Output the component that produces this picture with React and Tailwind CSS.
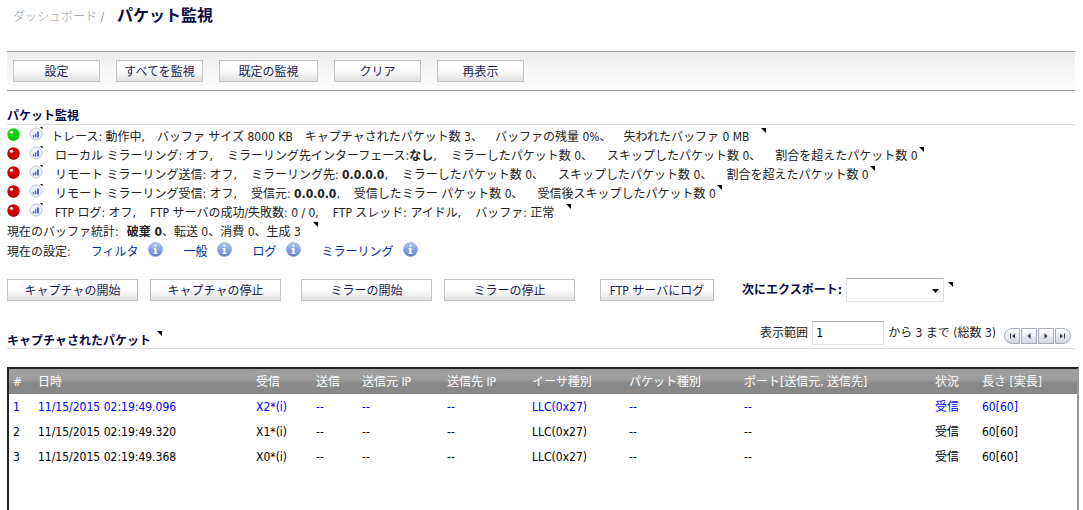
const buttonFace =
  "shrink-0 h-[22px] border border-[#c3c3c3] bg-linear-to-b from-white from-45% to-[#e2e2e2] pt-px text-center leading-5 text-[#1c1c50]";

const toolbarButtons = [
  { label: "設定", width: "w-[87px]" },
  { label: "すべてを監視", width: "w-[87px]" },
  { label: "既定の監視", width: "w-[99px]" },
  { label: "クリア", width: "w-[87px]" },
  { label: "再表示", width: "w-[87px]" },
];

const statusRows = [
  {
    id: "trace",
    on: true,
    parts: [
      "トレース: 動作中,",
      "バッファ サイズ 8000 KB",
      "キャプチャされたパケット数 3、",
      "バッファの残量 0%、",
      "失われたバッファ 0 MB",
    ],
    markerGap: "ml-3",
  },
  {
    id: "local",
    on: false,
    parts: [
      "ローカル ミラーリング: オフ,",
      <>
        ミラーリング先インターフェース:<b>なし</b>,
      </>,
      "ミラーしたパケット数 0、",
      "スキップしたパケット数 0、",
      "割合を超えたパケット数 0",
    ],
    markerGap: "ml-px",
  },
  {
    id: "remote-send",
    on: false,
    parts: [
      "リモート ミラーリング送信: オフ,",
      <>
        ミラーリング先: <b>0.0.0.0</b>,
      </>,
      "ミラーしたパケット数 0、",
      "スキップしたパケット数 0、",
      "割合を超えたパケット数 0",
    ],
    markerGap: "ml-px",
  },
  {
    id: "remote-receive",
    on: false,
    parts: [
      "リモート ミラーリング受信: オフ,",
      <>
        受信元: <b>0.0.0.0</b>,
      </>,
      "受信したミラー パケット数 0、",
      "受信後スキップしたパケット数 0",
    ],
    markerGap: "ml-px",
  },
  {
    id: "ftp",
    on: false,
    parts: [
      "FTP ログ: オフ,",
      "FTP サーバの成功/失敗数: 0 / 0,",
      "FTP スレッド: アイドル,",
      "バッファ: 正常",
    ],
    markerGap: "ml-3",
  },
];

const settingLinks = ["フィルタ", "一般", "ログ", "ミラーリング"];

const columns = [
  { label: "#", width: "w-[25px]" },
  { label: "日時", width: "w-[218px]" },
  { label: "受信", width: "w-[60px]" },
  { label: "送信", width: "w-[46px]" },
  { label: "送信元 IP", width: "w-[85px]" },
  { label: "送信先 IP", width: "w-[85px]" },
  { label: "イーサ種別", width: "w-[97px]" },
  { label: "パケット種別", width: "w-[115px]" },
  { label: "ポート[送信元, 送信先]", width: "w-[191px]" },
  { label: "状況", width: "w-[47px]" },
  { label: "長さ [実長]", width: "w-auto" },
];

const packets = [
  ["1", "11/15/2015 02:19:49.096", "X2*(i)", "--", "--", "--", "LLC(0x27)", "--", "--", "受信", "60[60]"],
  ["2", "11/15/2015 02:19:49.320", "X1*(i)", "--", "--", "--", "LLC(0x27)", "--", "--", "受信", "60[60]"],
  ["3", "11/15/2015 02:19:49.368", "X0*(i)", "--", "--", "--", "LLC(0x27)", "--", "--", "受信", "60[60]"],
];

const Marker = ({ className = "" }) => (
  <svg className={`h-[5px] w-[5px] shrink-0 ${className}`} viewBox="0 0 5 5" aria-hidden="true">
    <path d="M0 0H5V5Z" fill="#000" />
  </svg>
);

const StatusBall = ({ on }) => (
  <svg className="h-[13px] w-[13px] shrink-0" viewBox="0 0 13 13" aria-hidden="true">
    <circle cx="6.5" cy="6.5" r="6.2" fill={on ? "#0bd00b" : "#cc0404"} />
    <path
      d="M1 8.5a5.8 5.8 0 0 0 11 0a7 7 0 0 1-11 0Z"
      fill={on ? "#08b008" : "#a80000"}
    />
    <ellipse cx="4.5" cy="4.2" rx="1.8" ry="1.5" fill="#fff" opacity="0.9" />
  </svg>
);

const StatsIcon = () => (
  <svg className="h-[14px] w-[14px]" viewBox="0 0 14 14" aria-hidden="true">
    <circle cx="7" cy="7" r="6" fill="#eef0f7" stroke="#c3c7d8" />
    <path d="M3.8 8h1.5v2.5H3.8ZM5.9 6.5h1.5v4H5.9ZM8 4.5h2v6H8Z" fill="#5a6cc8" />
    <path d="M11 0h2.5v2.5Z" fill="#000" />
  </svg>
);

const InfoIcon = () => (
  <svg className="h-[15px] w-[15px]" viewBox="0 0 15 15" aria-hidden="true">
    <defs>
      <linearGradient id="info" x1="0" y1="0" x2="0" y2="1">
        <stop offset="0" stopColor="#b5c8f0" />
        <stop offset="1" stopColor="#5b80d2" />
      </linearGradient>
    </defs>
    <circle cx="7.5" cy="7.5" r="7" fill="url(#info)" stroke="#8aa2de" strokeWidth="0.7" />
    <path d="M6.5 2.8h2v2h-2ZM5.5 6h3v4.7h1v1.3h-4v-1.3h1V7.2h-1Z" fill="#fff" />
  </svg>
);

const pagerButtons = [
  { label: "最初", shape: "rounded-l-full pl-[2px]", path: "M1 1.5h1v5H1ZM6 1.5v5L3 4Z" },
  { label: "前", shape: "rounded-none", path: "M5.5 1v6L2.5 4Z" },
  { label: "次", shape: "rounded-none", path: "M2.5 1v6L5.5 4Z" },
  { label: "最後", shape: "rounded-r-full pr-[2px]", path: "M6 1.5h1v5H6ZM2 1.5v5L5 4Z" },
];

const Pager = () => (
  <div className="flex gap-px">
    {pagerButtons.map((item) => (
      <button
        key={item.label}
        aria-label={item.label}
        className={`flex h-4 w-4 items-center justify-center border border-[#a9adb9] bg-linear-to-b from-white to-[#d3d6e0] ${item.shape}`}
      >
        <svg className="h-2 w-2 shrink-0" viewBox="0 0 8 8" aria-hidden="true">
          <path d={item.path} fill="#33364a" />
        </svg>
      </button>
    ))}
  </div>
);

const StatusRow = ({ row }) => (
  <li className="flex h-[19px] items-start">
    <div className="flex items-center gap-[9px]">
      <StatusBall on={row.on} />
      <button aria-label="統計">
        <StatsIcon />
      </button>
    </div>
    <div className={`flex leading-5 ${row.on ? "ml-2 gap-3" : "ml-3 gap-3.5"}`}>
      {row.parts.map((part, index) => (
        <span key={index}>{part}</span>
      ))}
    </div>
    <Marker className={`mt-px ${row.markerGap}`} />
  </li>
);

const PacketTable = () => (
  <div className="-mr-1 flex-1 border-t-2 border-r-2 border-l-2 border-t-[#222] border-r-[#999] border-l-[#222]">
    <table className="w-full table-fixed text-left leading-6">
      <thead className="bg-linear-to-b from-[#9e9e9e] from-40% to-[#888] to-60% text-white">
        <tr>
          {columns.map((column) => (
            <th key={column.label} className={`h-[25px] p-0 pt-px pl-1 font-normal ${column.width}`}>
              {column.label}
            </th>
          ))}
        </tr>
      </thead>
      <tbody>
        {packets.map((packet, index) => (
          <tr key={packet[0]} className={index === 0 ? "text-[#0000f0]" : "text-black"}>
            {packet.map((cell, cellIndex) => (
              <td key={cellIndex} className="h-[25px] p-0 pt-px pl-1">
                {cell}
              </td>
            ))}
          </tr>
        ))}
      </tbody>
    </table>
  </div>
);

const App = () => (
  <main className="flex h-screen flex-col overflow-hidden bg-white pr-2 pl-[7px] font-['DejaVu_Sans_Condensed','Noto_Sans_CJK_JP',sans-serif] text-[12px] whitespace-nowrap text-[#222]">
    <header className="flex h-8 items-center gap-[13px] pl-[6px]">
      <span className="pt-px font-light text-[#999]">ダッシュボード /</span>
      <h1 className="text-[16px] font-bold text-[#0b0b45]">パケット監視</h1>
    </header>

    <div className="mt-[19px] flex h-10 items-center gap-4 border-t border-b border-[#a0a0a0] bg-linear-to-b from-[#ececec] to-white px-[6px]">
      {toolbarButtons.map((button) => (
        <button key={button.label} className={`${buttonFace} ${button.width}`}>
          {button.label}
        </button>
      ))}
    </div>

    <h2 className="mt-[15px] h-[19px] border-b border-[#ddd] leading-5 font-bold text-[#0b0b45]">
      パケット監視
    </h2>
    <ul className="mt-[2px]">
      {statusRows.map((row) => (
        <StatusRow key={row.id} row={row} />
      ))}
    </ul>
    <div className="flex h-5 leading-5">
      <span>現在のバッファ統計:</span>
      <span className="ml-2">
        <b>破棄 0</b>、転送 0、消費 0、生成 3
      </span>
      <Marker className="ml-3" />
    </div>
    <div className="flex h-5 leading-5">
      <span className="mr-5">現在の設定:</span>
      <div className="flex gap-5">
        {settingLinks.map((name) => (
          <a key={name} href="#" className="flex items-start gap-[10px] text-[#003399]">
            {name}
            <InfoIcon />
          </a>
        ))}
      </div>
    </div>

    <div className="mt-[15px] flex h-[25px] items-center">
      <div className="flex gap-3">
        <button className={`${buttonFace} w-[131px]`}>キャプチャの開始</button>
        <button className={`${buttonFace} w-[131px]`}>キャプチャの停止</button>
      </div>
      <div className="ml-5 flex gap-3">
        <button className={`${buttonFace} w-[131px]`}>ミラーの開始</button>
        <button className={`${buttonFace} w-[131px]`}>ミラーの停止</button>
      </div>
      <button className={`${buttonFace} ml-[25px] w-[114px]`}>FTP サーバにログ</button>
      <label htmlFor="export" className="ml-7 font-bold text-[#0b0b45]">
        次にエクスポート:
      </label>
      <div className="relative ml-1 h-6 w-[98px]">
        <select
          id="export"
          className="h-6 w-full appearance-none border border-[#dde3ea] border-t-[#abadb3] bg-white"
        >
          <option></option>
        </select>
        <svg className="pointer-events-none absolute top-[11px] right-[5px] h-1 w-[7px]" viewBox="0 0 7 4">
          <path d="M0 0H7L3.5 4Z" fill="#000" />
        </svg>
      </div>
      <Marker className="ml-1 self-start mt-[5px]" />
    </div>

    <div className="mt-[19px] flex h-[28px] items-start justify-between border-b border-[#ddd]">
      <div className="flex pt-[10px]">
        <h2 className="leading-5 font-bold text-[#0b0b45]">キャプチャされたパケット</h2>
        <Marker className="ml-[6px]" />
      </div>
      <div className="flex gap-1 pr-1 leading-6">
        <label htmlFor="range">表示範囲</label>
        <input
          id="range"
          defaultValue="1"
          className="h-6 w-[72px] border border-[#dde3ea] border-t-[#abadb3] px-[3px] text-black"
        />
        <span className="mr-1">から 3 まで (総数 3)</span>
        <div className="pt-[7px]">
          <Pager />
        </div>
      </div>
    </div>

    <div className="mt-[18px] flex flex-1 flex-col">
      <PacketTable />
    </div>
  </main>
);

export default App;
